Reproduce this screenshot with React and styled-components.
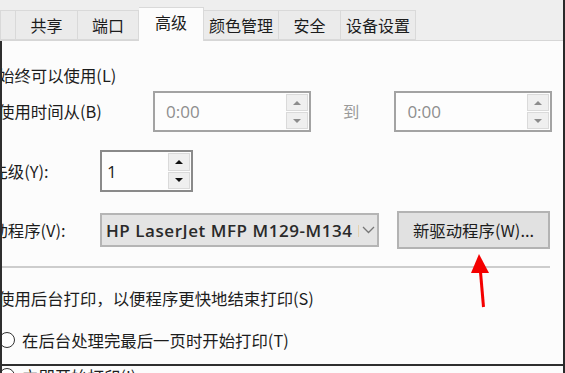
import React from 'react'
import styled, { createGlobalStyle } from 'styled-components'

const GlobalStyle = createGlobalStyle`
  body {
    margin: 0;
    background: #fcfcfc;
  }
  #root {
    width: 565px;
    height: 373px;
    overflow: hidden;
  }
`

const Window = styled.div`
  position: relative;
  width: 565px;
  height: 373px;
  box-sizing: border-box;
  background: #fcfcfc;
  border-right: 2px solid #2a2a2a;
  overflow: hidden;
  font-family: "Noto Sans CJK SC", "Noto Sans", sans-serif;
  font-size: 16.4px;
  color: #1c1c1c;
`

const TabStrip = styled.div`
  display: flex;
  align-items: flex-end;
  height: 40px;
  background: #eeeeee;
  border-bottom: 1px solid #d6d6d6;
`

const Tab = styled.div`
  box-sizing: border-box;
  width: ${(p) => p.$w}px;
  height: ${(p) => (p.$active ? 34 : 30)}px;
  margin-bottom: ${(p) => (p.$active ? -1 : 0)}px;
  display: flex;
  align-items: center;
  justify-content: center;
  padding-bottom: ${(p) => (p.$active ? 5 : 0)}px;
  background: ${(p) => (p.$active ? '#fcfcfc' : '#ebebeb')};
  border: 1px solid #d9d9d9;
  border-left: ${(p) => (p.$first ? '1px solid #d9d9d9' : 'none')};
  border-bottom: ${(p) => (p.$active ? 'none' : '1px solid #d9d9d9')};
  line-height: 1;
  font-size: 16px;
  position: relative;
  z-index: ${(p) => (p.$active ? 1 : 0)};
`

const Body = styled.div`
  height: 332px;
  border-left: 2px solid #2e2e2e;
  overflow: hidden;
`

const Content = styled.div`
  display: flex;
  flex-direction: column;
  margin-left: -27px;
`

const Row = styled.div`
  display: flex;
  align-items: center;
  flex-shrink: 0;
  height: ${(p) => p.$h}px;
  margin-top: ${(p) => p.$mt}px;
  padding-left: ${(p) => p.$indent || 0}px;
  line-height: 1;
  white-space: nowrap;
`

const Radio = styled.span`
  box-sizing: border-box;
  width: 16px;
  height: 16px;
  border: 1.5px solid #333;
  border-radius: 50%;
  background: #fff;
  margin-right: 7px;
  flex-shrink: 0;
`

const Label = styled.span`
  width: ${(p) => (p.$w ? `${p.$w}px` : 'auto')};
  flex-shrink: 0;
  color: ${(p) => (p.$dim ? '#9a9a9a' : '#1c1c1c')};
  margin: ${(p) => p.$m || 0};
`

const SpinBox = styled.div`
  box-sizing: border-box;
  display: flex;
  align-items: stretch;
  width: ${(p) => p.$w}px;
  height: ${(p) => p.$h}px;
  border: 2px solid ${(p) => (p.$disabled ? '#a3a3a3' : '#8a8a8a')};
  background: #fdfdfd;
`

const SpinValue = styled.span`
  flex: 1;
  display: flex;
  align-items: center;
  padding-left: ${(p) => p.$pad}px;
  color: ${(p) => (p.$disabled ? '#8e8e8e' : '#1c1c1c')};
  font-family: "Open Sans", "Noto Sans", sans-serif;
  font-size: 17px;
`

const SpinButtons = styled.div`
  display: flex;
  flex-direction: column;
  width: 22px;
  padding: 1px 1px 1px 0;
  gap: 1px;
`

const SpinButton = styled.div`
  flex: 1;
  display: flex;
  align-items: center;
  justify-content: center;
  background: #efefef;
  border: 1px solid #dadada;
`

const Arrow = styled.span`
  width: 0;
  height: 0;
  border-left: 4px solid transparent;
  border-right: 4px solid transparent;
  ${(p) => (p.$down ? 'border-top' : 'border-bottom')}: 4px solid ${(p) => (p.$disabled ? '#8c8c8c' : '#111')};
`

const Select = styled.div`
  box-sizing: border-box;
  display: flex;
  align-items: center;
  width: 279px;
  height: 34px;
  background: #e4e4e4;
  border: 2px solid #b5b5b5;
  padding-left: 4px;
`

const SelectText = styled.span`
  flex: 1;
  overflow: hidden;
  white-space: nowrap;
  font-family: "Open Sans", "Noto Sans", sans-serif;
  font-size: 17px;
  font-weight: 600;
  letter-spacing: 0.55px;
  color: #2a2a2a;
`

const Chevron = styled.svg`
  width: 18px;
  height: 12px;
  flex-shrink: 0;
`

const Button = styled.div`
  box-sizing: border-box;
  display: flex;
  align-items: center;
  justify-content: center;
  width: 153px;
  height: 38px;
  margin-left: 18px;
  background: #e1e1e1;
  border: 2px solid #b3b3b3;
`

const Separator = styled.div`
  flex-shrink: 0;
  width: 575px;
  height: 2px;
  margin-top: 17px;
  background: #cdcdcd;
`

const BottomEdge = styled.div`
  position: absolute;
  left: 0;
  right: 0;
  top: 364px;
  height: 2px;
  background: #2e2e2e;
`

const RedArrow = styled.svg`
  position: absolute;
  left: 468px;
  top: 250px;
  width: 26px;
  height: 60px;
`

const tabs = [
  { w: 16, label: '', first: true },
  { w: 62, label: '共享' },
  { w: 61, label: '端口' },
  { w: 65, label: '高级', active: true },
  { w: 75, label: '颜色管理' },
  { w: 62, label: '安全' },
  { w: 75, label: '设备设置' },
]

function Spin({ w, h, value, disabled, pad }) {
  return (
    <SpinBox $w={w} $h={h} $disabled={disabled}>
      <SpinValue $pad={pad} $disabled={disabled}>{value}</SpinValue>
      <SpinButtons>
        <SpinButton><Arrow $disabled={disabled} /></SpinButton>
        <SpinButton><Arrow $down $disabled={disabled} /></SpinButton>
      </SpinButtons>
    </SpinBox>
  )
}

export default function App() {
  return (
    <>
      <GlobalStyle />
      <Window>
        <TabStrip>
          {tabs.map((t, i) => (
            <Tab key={i} $w={t.w} $active={t.active} $first={t.first}>
              {t.label}
            </Tab>
          ))}
        </TabStrip>
        <Body>
          <Content>
            <Row $h={32} $mt={18}>
              <Radio />
              <Label>始终可以使用(L)</Label>
            </Row>
            <Row $h={41} $mt={0}>
              <Radio />
              <Label $w={155}>使用时间从(B)</Label>
              <Spin w={158} h={41} value="0:00" disabled pad={11} />
              <Label $dim $m="0 35px 0 32px">到</Label>
              <Spin w={158} h={41} value="0:00" disabled pad={11} />
            </Row>
            <Row $h={42} $mt={18}>
              <Label $w={125}>优先级(Y):</Label>
              <Spin w={93} h={42} value="1" pad={5} />
            </Row>
            <Row $h={38} $mt={19}>
              <Label $w={125}>驱动程序(V):</Label>
              <Select>
                <SelectText>HP LaserJet MFP M129-M134 PCLmS</SelectText>
                <Chevron viewBox="0 0 18 12">
                  <path d="M4 3 L9.5 8.5 L15 3" fill="none" stroke="#777" strokeWidth="1.3" />
                </Chevron>
              </Select>
              <Button>新驱动程序(W)...</Button>
            </Row>
            <Separator />
            <Row $h={32} $mt={14}>
              <Radio />
              <Label>使用后台打印，以便程序更快地结束打印(S)</Label>
            </Row>
            <Row $h={32} $mt={10} $indent={24}>
              <Radio />
              <Label>在后台处理完最后一页时开始打印(T)</Label>
            </Row>
            <Row $h={32} $mt={4} $indent={24}>
              <Radio />
              <Label>立即开始打印(I)</Label>
            </Row>
          </Content>
        </Body>
        <BottomEdge />
        <RedArrow viewBox="0 0 26 60">
          <polygon points="11,4 3,23 21,23" fill="#f40000" />
          <line x1="12.5" y1="22" x2="15.5" y2="57" stroke="#f40000" strokeWidth="3" />
        </RedArrow>
      </Window>
    </>
  )
}
